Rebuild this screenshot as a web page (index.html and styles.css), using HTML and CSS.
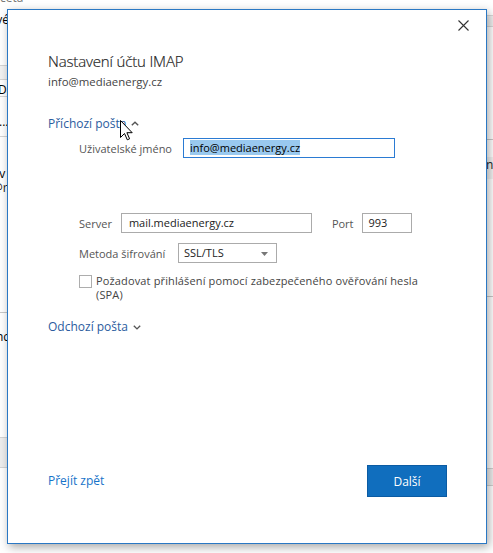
FILE: index.html
```html
<!DOCTYPE html>
<html lang="cs">
<head>
<meta charset="utf-8">
<title>Nastavení účtu IMAP</title>
<link rel="stylesheet" href="styles.css">
</head>
<body>
<div class="app">
  <div class="bg-left">
    <div class="bg-top">ceta</div>
    <div class="bg-text"><div>Nové</div><div>Pet</div></div>
    <div class="bg-band"></div>
    <div class="bg-row r-da">Da</div>
    <div class="bg-row r-dots">...</div>
    <div class="bg-text t2"><div>ov</div><div class="purple">@r</div></div>
    <div class="bg-line l1"></div>
    <div class="bg-nc">nc</div>
    <div class="bg-band b2"></div>
  </div>
  <div class="bg-right">
    <div class="rb1"></div>
    <div class="rl1"></div>
    <div class="rn">n</div>
    <div class="rl2"></div>
    <div class="rb2"></div>
  </div>
</div>

<div class="dialog">
  <button class="close" aria-label="Zavřít">
    <svg width="11" height="11" viewBox="0 0 11 11"><path d="M0.5 0.5L10.5 10.5M10.5 0.5L0.5 10.5" stroke="#333" stroke-width="1.1" fill="none"/></svg>
  </button>
  <div class="content">
    <h1 class="title">Nastavení účtu IMAP</h1>
    <div class="email">info@mediaenergy.cz</div>

    <div class="section-link incoming">Příchozí pošta
      <svg class="chev" width="8" height="5" viewBox="0 0 8 5"><path d="M0.8 4.3L4 1.2L7.2 4.3" stroke="#555" stroke-width="1.4" fill="none"/></svg>
    </div>

    <div class="row user-row">
      <span class="label">Uživatelské jméno</span>
      <div class="input user-input"><span class="sel">info@mediaenergy.cz</span></div>
    </div>

    <div class="row server-row">
      <span class="label">Server</span>
      <div class="input server-input">mail.mediaenergy.cz</div>
      <span class="label port-label">Port</span>
      <div class="input port-input">993</div>
    </div>

    <div class="row enc-row">
      <span class="label">Metoda šifrování</span>
      <div class="select">SSL/TLS
        <svg class="tri" width="7" height="4" viewBox="0 0 7 4"><path d="M0 0H7L3.5 4Z" fill="#777"/></svg>
      </div>
    </div>

    <div class="row check-row">
      <span class="checkbox"></span>
      <span class="check-label">Požadovat přihlášení pomocí zabezpečeného ověřování hesla (SPA)</span>
    </div>

    <div class="section-link outgoing">Odchozí pošta
      <svg class="chev" width="8" height="5" viewBox="0 0 8 5"><path d="M0.8 0.8L4 3.9L7.2 0.8" stroke="#555" stroke-width="1.4" fill="none"/></svg>
    </div>

    <div class="footer">
      <a class="back">Přejít zpět</a>
      <button class="next">Další</button>
    </div>
  </div>
  <svg class="cursor" width="13" height="21" viewBox="0 0 13 21"><path d="M0.5 0.5V17.5L4.5 13.5L7.3 19.8L9.6 18.8L6.9 12.7H12.2Z" fill="#fff" stroke="#000" stroke-width="1" stroke-linejoin="miter"/></svg>
</div>
</body>
</html>
```
FILE: styles.css
```css
* { box-sizing: border-box; }
html, body { margin: 0; padding: 0; }
body {
  width: 493px;
  height: 553px;
  overflow: hidden;
  background: #fff;
  font-family: "Open Sans", "Noto Sans", sans-serif;
  position: relative;
}
.app {
  display: flex;
  justify-content: space-between;
  height: 553px;
}
.bg-left {
  width: 60px;
  font-size: 12px;
  color: #000;
}
.bg-top {
  margin-top: -9px;
  height: 12px;
  color: #777;
  font-size: 12px;
  line-height: 14px;
}
.bg-text {
  margin-top: 10px;
  margin-left: -20px;
  line-height: 14px;
}
.bg-band {
  margin-top: 24px;
  height: 15px;
  background: #f2f2f2;
  border-top: 1px solid #d4d4d4;
  border-bottom: 1px solid #d4d4d4;
}
.bg-row {
  border-bottom: 1px solid #d4d4d4;
  line-height: 14px;
}
.r-da { height: 17px; padding-top: 3px; margin-left: -2px; }
.r-dots { height: 40px; padding-top: 18px; margin-left: -1px; }
.bg-text.t2 { margin-top: 30px; margin-left: -8px; }
.purple { color: #222; }
.bg-line { height: 1px; background: #c8c8c8; margin-top: 117px; }
.bg-nc { margin-top: 17px; margin-left: -4px; line-height: 14px; }
.bg-band.b2 { margin-top: 93px; height: 31px; background: #eeeeee; }
.bg-right {
  width: 20px;
  font-size: 12px;
}
.rb1 { margin-top: 15px; height: 12px; background: #f0f0f0; border-top: 1px solid #d8d8d8; border-bottom: 1px solid #d8d8d8; }
.rl1 { margin-top: 112px; height: 1px; background: #c8c8c8; }
.rn { margin-top: 17px; height: 22px; background: #f2f2f2; color: #222; line-height: 16px; padding-left: 13px; }
.rl2 { margin-top: 117px; height: 1px; background: #c8c8c8; }
.rb2 { margin-top: 171px; height: 18px; background: #eeeeee; border-top: 1px solid #d0d0d0; border-bottom: 1px solid #d0d0d0; }

.dialog {
  position: absolute;
  left: 7px;
  top: 9px;
  width: 480px;
  height: 535px;
  background: #fff;
  border: 1px solid #2a78c4;
  box-shadow: 2px 3px 9px rgba(0,0,0,0.35);
}
.close {
  position: absolute;
  top: 10px;
  right: 17px;
  width: 11px;
  height: 11px;
  padding: 0;
  border: 0;
  background: none;
  display: block;
}
.close svg { display: block; }
.content {
  height: 100%;
  padding: 40px 39px 46px 40px;
  display: flex;
  flex-direction: column;
}
.title {
  margin: 0;
  font-weight: 300;
  font-size: 15px;
  letter-spacing: -0.15px;
  line-height: 22px;
  color: #1f1f1f;
  -webkit-text-stroke: 0.2px #1f1f1f;
}
.email {
  margin-top: 2px;
  font-size: 11.4px;
  line-height: 16px;
  color: #444;
}
.section-link {
  font-size: 12px;
  line-height: 16px;
  color: #2b5c9e;
  display: flex;
  align-items: center;
}
.section-link .chev { margin-left: 5px; }
.incoming { margin-top: 26px; }
.incoming .chev { margin-top: -2px; }
.outgoing { margin-top: 17px; }
.row {
  display: flex;
  align-items: center;
  padding-left: 31px;
  font-size: 11px;
  color: #555;
}
.label { white-space: nowrap; }
.input {
  height: 20px;
  border: 1px solid #ababab;
  background: #fff;
  font-size: 11px;
  line-height: 18px;
  color: #222;
  padding-left: 7px;
  white-space: nowrap;
}
.user-row { margin-top: 6px; }
.user-input {
  margin-left: 11px;
  width: 212px;
  border-color: #2b7bd3;
  padding-left: 6px;
}
.sel { background: #99c9ef; color: #000; }
.server-row { margin-top: 55px; }
.server-input { margin-left: 9px; width: 191px; }
.port-label { margin-left: 20px; }
.port-input { margin-left: 8px; width: 50px; padding-left: 6px; }
.enc-row { margin-top: 10px; }
.enc-row .label { width: 99px; }
.select {
  width: 99px;
  height: 20px;
  border: 1px solid #ababab;
  background: #fff;
  font-size: 11px;
  line-height: 18px;
  color: #222;
  padding-left: 5px;
  position: relative;
  display: flex;
  align-items: center;
}
.select .tri { position: absolute; right: 8px; top: 8px; }
.check-row { margin-top: 11px; align-items: flex-start; }
.checkbox {
  width: 13px;
  height: 13px;
  border: 1px solid #adadad;
  background: #fff;
  flex: none;
  margin-top: 1px;
}
.check-label {
  margin-left: 4px;
  line-height: 14px;
  color: #444;
  width: 340px;
  letter-spacing: 0.14px;
}
.footer {
  margin-top: auto;
  display: flex;
  justify-content: space-between;
  align-items: center;
}
.back {
  font-size: 12px;
  color: #1673c9;
  line-height: 16px;
}
.next {
  width: 80px;
  height: 32px;
  background: #106ebe;
  border: 1px solid #0b5ba3;
  color: #fff;
  font-family: inherit;
  font-size: 12px;
  padding: 0;
}
.cursor {
  position: absolute;
  left: 112px;
  top: 110px;
}
```
